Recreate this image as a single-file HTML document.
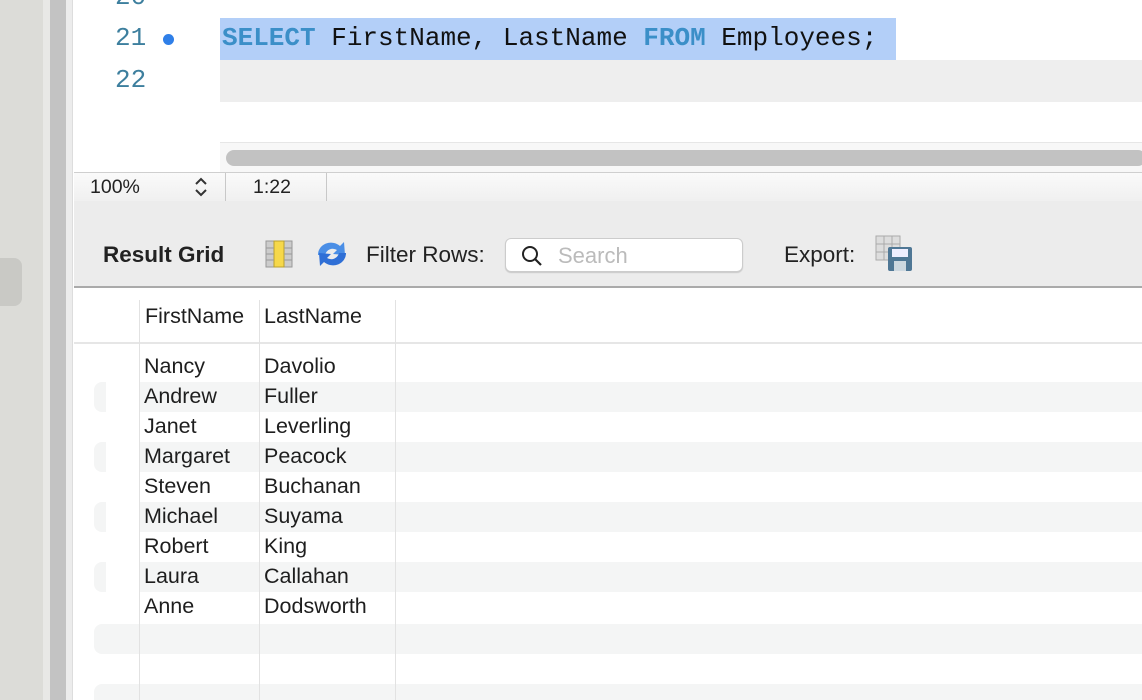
<!DOCTYPE html>
<html style="overflow:hidden;width:1142px;height:700px"><head><style>
*{margin:0;padding:0;box-sizing:border-box}
body{width:1142px;height:700px;overflow:hidden;background:#fff;position:relative;font-family:"Liberation Sans",sans-serif}
.a{position:absolute}
.mono{font-family:"Liberation Mono","DejaVu Sans Mono",monospace;font-size:26px}
.cell{position:absolute;font-size:21.5px;color:#1e1e1e}
</style></head><body>
<div class="a" style="left:0;top:0;width:43px;height:700px;background:#dcdcd8"></div>
<div class="a" style="left:0;top:258px;width:22px;height:48px;background:#c9c9c5;border-radius:0 8px 8px 0"></div>
<div class="a" style="left:43px;top:0;width:7px;height:700px;background:#e8e8e6"></div>
<div class="a" style="left:50px;top:0;width:16px;height:700px;background:#c3c3c3"></div>
<div class="a" style="left:66px;top:0;width:7px;height:700px;background:#ececec;border-right:1px solid #ddd"></div>

<div class="a mono" style="left:115px;top:-18px;color:#3d7f9e">20</div>
<div class="a mono" style="left:115px;top:23px;color:#3d7f9e">21</div>
<div class="a" style="left:163px;top:34px;width:11px;height:11px;border-radius:50%;background:#2f7fe8"></div>
<div class="a mono" style="left:115px;top:65px;color:#3d7f9e">22</div>
<div class="a" style="left:220px;top:18px;width:676px;height:42px;background:#b3cff8"></div>
<div class="a" style="left:220px;top:60px;width:922px;height:42px;background:#eeeeee"></div>
<div class="a mono" style="left:222px;top:23px;color:#111;white-space:pre"><span style="color:#3b8fc8;font-weight:bold">SELECT</span> FirstName, LastName <span style="color:#3b8fc8;font-weight:bold">FROM</span> Employees;</div>
<div class="a" style="left:220px;top:142px;width:922px;height:30px;background:#f7f7f7;border-top:1px solid #e6e6e6"></div>
<div class="a" style="left:226px;top:150px;width:920px;height:16px;background:#c2c2c2;border-radius:8px"></div>

<div class="a" style="left:74px;top:172px;width:1068px;height:29px;background:linear-gradient(#fafafa,#f0f0f0);border-top:1px solid #cfcfcf"></div>
<div class="a" style="left:90px;top:176px;font-size:19.5px;color:#222">100%</div>
<svg class="a" style="left:193px;top:176px" width="16" height="22"><path d="M3 8 L8 3 L13 8 M3 14 L8 19 L13 14" fill="none" stroke="#333" stroke-width="2"/></svg>
<div class="a" style="left:225px;top:173px;width:1px;height:28px;background:#c8c8c8"></div>
<div class="a" style="left:253px;top:176px;font-size:19.5px;color:#222">1:22</div>
<div class="a" style="left:326px;top:173px;width:1px;height:28px;background:#c8c8c8"></div>

<div class="a" style="left:74px;top:201px;width:1068px;height:87px;background:#ececec;border-bottom:2px solid #aaa"></div>
<div class="a" style="left:103px;top:242px;font-size:22.5px;font-weight:bold;color:#222">Result Grid</div>
<svg class="a" style="left:265px;top:240px" width="28" height="28"><rect x="1" y="1" width="26" height="26" fill="#ccc" stroke="#999"/><rect x="9" y="1" width="10" height="26" fill="#f6d84a" stroke="#b9a030"/><g stroke="#999"><line x1="1" y1="8" x2="9" y2="8"/><line x1="1" y1="14" x2="9" y2="14"/><line x1="1" y1="20" x2="9" y2="20"/><line x1="19" y1="8" x2="27" y2="8"/><line x1="19" y1="14" x2="27" y2="14"/><line x1="19" y1="20" x2="27" y2="20"/></g></svg>
<svg class="a" style="left:315px;top:239px" width="34" height="30"><path d="M3 16 A13 12 0 0 1 25 7 L29 3 L30 16 L18 15 L22 11 A8 8 0 0 0 10 16 Z" fill="#4a8ee6"/><path d="M31 14 A13 12 0 0 1 9 23 L5 27 L4 14 L16 15 L12 19 A8 8 0 0 0 24 14 Z" fill="#2f6fd6"/></svg>
<div class="a" style="left:366px;top:242px;font-size:22.5px;color:#222">Filter Rows:</div>
<div class="a" style="left:505px;top:238px;width:238px;height:34px;background:#fff;border:1px solid #ccc;border-radius:6px;box-shadow:0 1px 1px rgba(0,0,0,.15)"></div>
<svg class="a" style="left:520px;top:244px" width="24" height="24"><circle cx="10" cy="10" r="7" fill="none" stroke="#222" stroke-width="2"/><line x1="15" y1="15" x2="21" y2="21" stroke="#222" stroke-width="2.2"/></svg>
<div class="a" style="left:558px;top:243px;font-size:22px;color:#bbb">Search</div>
<div class="a" style="left:784px;top:242px;font-size:22.5px;color:#222">Export:</div>
<svg class="a" style="left:875px;top:235px" width="40" height="38"><rect x="1" y="1" width="24" height="24" fill="#ddd" stroke="#aaa"/><g stroke="#aaa"><line x1="1" y1="9" x2="25" y2="9"/><line x1="1" y1="17" x2="25" y2="17"/><line x1="9" y1="1" x2="9" y2="25"/><line x1="17" y1="1" x2="17" y2="25"/></g><rect x="13" y="12" width="24" height="24" fill="#4f7795" rx="2"/><rect x="17" y="14" width="16" height="8" fill="#eef"/><rect x="19" y="26" width="12" height="10" fill="#cdd8e0"/></svg>

<div class="a" style="left:74px;top:342px;width:1068px;height:2px;background:#e6e6e6"></div>
<div class="a" style="left:94px;top:382px;width:1048px;height:30px;background:#f4f5f5;border-radius:8px 0 0 8px"></div>
<div class="a" style="left:94px;top:442px;width:1048px;height:30px;background:#f4f5f5;border-radius:8px 0 0 8px"></div>
<div class="a" style="left:94px;top:502px;width:1048px;height:30px;background:#f4f5f5;border-radius:8px 0 0 8px"></div>
<div class="a" style="left:94px;top:562px;width:1048px;height:30px;background:#f4f5f5;border-radius:8px 0 0 8px"></div>
<div class="a" style="left:94px;top:624px;width:1048px;height:30px;background:#f4f5f5;border-radius:8px 0 0 8px"></div>
<div class="a" style="left:94px;top:684px;width:1048px;height:16px;background:#f4f5f5;border-radius:8px 0 0 0"></div>
<div class="a" style="left:106px;top:382px;width:33px;height:30px;background:#fff"></div>
<div class="a" style="left:106px;top:442px;width:33px;height:30px;background:#fff"></div>
<div class="a" style="left:106px;top:502px;width:33px;height:30px;background:#fff"></div>
<div class="a" style="left:106px;top:562px;width:33px;height:30px;background:#fff"></div>
<div class="a" style="left:139px;top:300px;width:1px;height:400px;background:#e2e2e2"></div>
<div class="a" style="left:259px;top:300px;width:1px;height:400px;background:#e2e2e2"></div>
<div class="a" style="left:395px;top:300px;width:1px;height:400px;background:#e2e2e2"></div>
<div class="cell" style="left:145px;top:304px">FirstName</div>
<div class="cell" style="left:264px;top:304px">LastName</div>
<div class="cell" style="left:144px;top:354px">Nancy</div><div class="cell" style="left:264px;top:354px">Davolio</div>
<div class="cell" style="left:144px;top:384px">Andrew</div><div class="cell" style="left:264px;top:384px">Fuller</div>
<div class="cell" style="left:144px;top:414px">Janet</div><div class="cell" style="left:264px;top:414px">Leverling</div>
<div class="cell" style="left:144px;top:444px">Margaret</div><div class="cell" style="left:264px;top:444px">Peacock</div>
<div class="cell" style="left:144px;top:474px">Steven</div><div class="cell" style="left:264px;top:474px">Buchanan</div>
<div class="cell" style="left:144px;top:504px">Michael</div><div class="cell" style="left:264px;top:504px">Suyama</div>
<div class="cell" style="left:144px;top:534px">Robert</div><div class="cell" style="left:264px;top:534px">King</div>
<div class="cell" style="left:144px;top:564px">Laura</div><div class="cell" style="left:264px;top:564px">Callahan</div>
<div class="cell" style="left:144px;top:594px">Anne</div><div class="cell" style="left:264px;top:594px">Dodsworth</div>
</body></html>
